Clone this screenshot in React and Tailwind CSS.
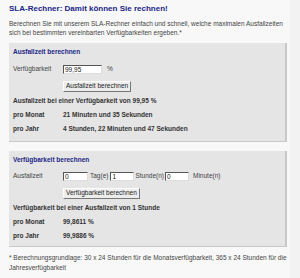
const Field = ({ value, className }) => (
  <input
    readOnly
    value={value}
    className={`h-[9px] border border-t-[#555] border-l-[#555] border-r-[#ddd] border-b-[#ddd] bg-white px-[1px] text-[6.5px] leading-none text-[#222] outline-none ${className}`}
  />
);

const Button = ({ children }) => (
  <button className="h-[11px] border border-t-[#fff] border-l-[#fff] border-r-[#777] border-b-[#777] bg-[#ededed] px-[2px] text-[6.5px] leading-none text-[#222]">
    {children}
  </button>
);

const Row = ({ label, children, bold }) => (
  <div className={`flex h-[10px] items-center ${bold ? "font-bold text-[#333]" : "text-[#444]"}`}>
    <div className="w-[50px] shrink-0">{label}</div>
    <div className="flex items-center">{children}</div>
  </div>
);

export default function App() {
  return (
    <div
      className="flex h-[278px] w-[300px] bg-[#f2f2f2] text-[6.5px] leading-[10px] text-[#444]"
      style={{ fontFamily: '"Liberation Sans", Arial, sans-serif' }}
    >
      <div className="w-[290px] bg-[#f8f8f8] pl-[9px] pt-[4px]">
        <h1 className="text-[8px] font-bold leading-[10px] text-[#1b2585]">
          SLA-Rechner: Damit können Sie rechnen!
        </h1>
        <p className="mt-[5px] leading-[9px]">
          Berechnen Sie mit unserem SLA-Rechner einfach und schnell, welche maximalen Ausfallzeiten
          sich bei bestimmten vereinbarten Verfügbarkeiten ergeben.*
        </p>

        <div className="mt-[6px] w-[278px] border-r-2 border-b border-[#c8c8c8] bg-[#e5e5e5] px-[4px] pt-[4px] pb-[7px]">
          <h2 className="font-bold leading-[10px] text-[#1b2585]">Ausfallzeit berechnen</h2>
          <div className="mt-[7px] flex flex-col gap-[7px]">
            <Row label="Verfügbarkeit">
              <Field value="99,95" className="w-[39px]" />
              <span className="ml-[5px]">%</span>
            </Row>
            <div className="flex">
              <div className="w-[50px] shrink-0" />
              <Button>Ausfallzeit berechnen</Button>
            </div>
          </div>
          <div className="mt-[4px] flex flex-col gap-[4px] font-bold text-[#333]">
            <div>Ausfallzeit bei einer Verfügbarkeit von 99,95 %</div>
            <Row label="pro Monat" bold>21 Minuten und 35 Sekunden</Row>
            <Row label="pro Jahr" bold>4 Stunden, 22 Minuten und 47 Sekunden</Row>
          </div>
        </div>

        <div className="mt-[9px] w-[278px] border-r-2 border-b border-[#c8c8c8] bg-[#e5e5e5] px-[4px] pt-[4px] pb-[5px]">
          <h2 className="font-bold leading-[10px] text-[#1b2585]">Verfügbarkeit berechnen</h2>
          <div className="mt-[6px] flex flex-col gap-[7px]">
            <Row label="Ausfallzeit">
              <Field value="0" className="w-[25px]" />
              <span className="ml-[2px] mr-[2px]">Tag(e)</span>
              <Field value="1" className="w-[24px]" />
              <span className="ml-[1px] mr-[1px]">Stunde(n)</span>
              <Field value="0" className="w-[24px]" />
              <span className="ml-[4px]">Minute(n)</span>
            </Row>
            <div className="flex">
              <div className="w-[50px] shrink-0" />
              <Button>Verfügbarkeit berechnen</Button>
            </div>
          </div>
          <div className="mt-[4px] flex flex-col gap-[4px] font-bold text-[#333]">
            <div>Verfügbarkeit bei einer Ausfallzeit von 1 Stunde</div>
            <Row label="pro Monat" bold>99,8611 %</Row>
            <Row label="pro Jahr" bold>99,9886 %</Row>
          </div>
        </div>

        <p className="mt-[6px] leading-[10px]">
          * Berechnungsgrundlage: 30 x 24 Stunden für die Monatsverfügbarkeit, 365 x 24 Stunden für die
          Jahresverfügbarkeit
        </p>
      </div>
    </div>
  );
}
